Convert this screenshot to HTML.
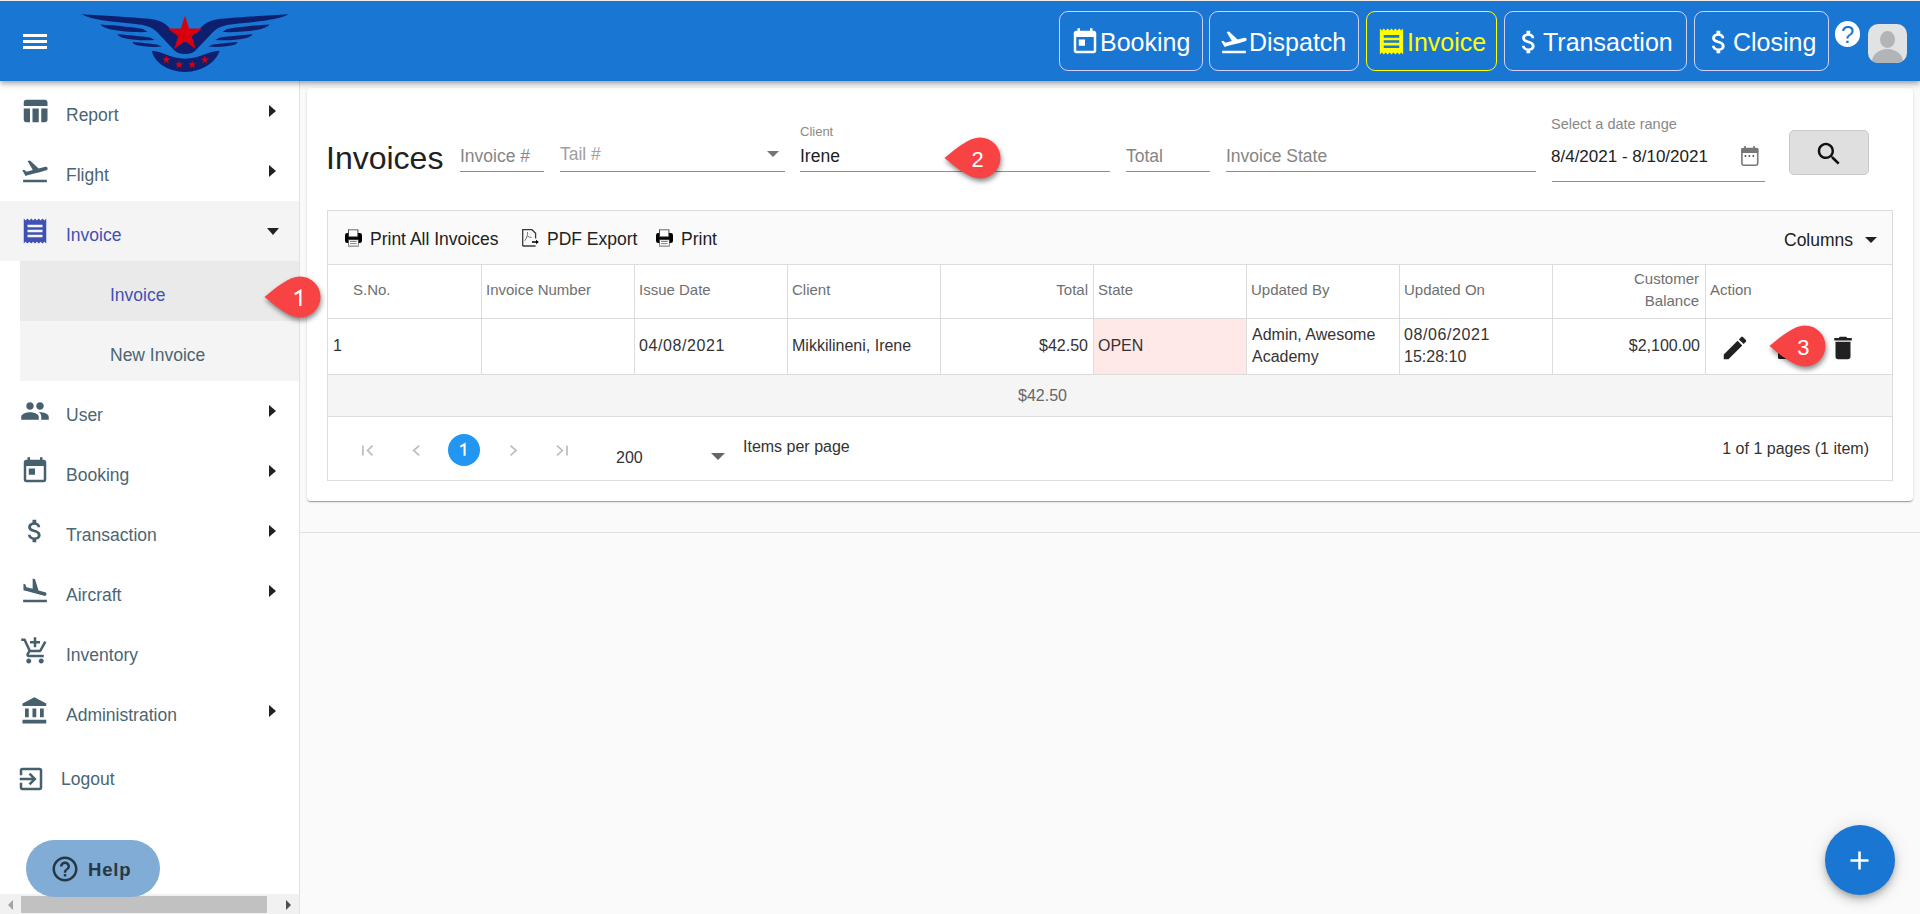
<!DOCTYPE html>
<html><head><meta charset="utf-8">
<style>
*{box-sizing:border-box;margin:0;padding:0}
html,body{width:1920px;height:914px;overflow:hidden;background:#fafafa;font-family:"Liberation Sans",sans-serif;position:relative}
.abs{position:absolute}
svg{position:absolute;overflow:visible;z-index:7}
.t{position:absolute;white-space:nowrap;line-height:1;z-index:7}
.hb{position:absolute;top:11px;height:60px;border:1px solid #d2d0ff;border-radius:9px;z-index:6}
.arr{position:absolute;left:269px;width:0;height:0;border-top:6px solid transparent;border-bottom:6px solid transparent;border-left:7px solid #212121;z-index:7}
.ul{position:absolute;height:1px;background:#8d8d8d;z-index:7}
.vl{position:absolute;width:1px;background:#dcdcdc;z-index:7}
.hl{position:absolute;height:1px;background:#dcdcdc;z-index:7}
.z{z-index:6}
</style></head>
<body>

<div class="abs" style="left:0;top:0;width:1920px;height:1px;background:#f3e9e3;z-index:6"></div>
<div class="abs" style="left:0;top:1px;width:1920px;height:80px;background:#1976d2;box-shadow:0 2px 4px -1px rgba(0,0,0,.2),0 4px 5px 0 rgba(0,0,0,.14),0 1px 10px 0 rgba(0,0,0,.12);z-index:5"></div>
<div class="abs z" style="left:23px;top:34px;width:24px;height:3px;background:#fff"></div>
<div class="abs z" style="left:23px;top:40px;width:24px;height:3px;background:#fff"></div>
<div class="abs z" style="left:23px;top:46px;width:24px;height:3px;background:#fff"></div>
<svg style="left:81px;top:13px" width="208" height="60" viewBox="0 0 208 60"><path fill="#0d1f6e" d="M0.5,1.2 C20,2.5 50,4 68,5.8 C77,6.8 82,9 87,13.5 L105,30 L105,41 C99,41 96,40 93,37 L76,19 C70,13 62,11.5 50,10.5 C30,8.5 10,6.5 0.5,1.2 Z"/><g transform="translate(208,0) scale(-1,1)"><path fill="#0d1f6e" d="M0.5,1.2 C20,2.5 50,4 68,5.8 C77,6.8 82,9 87,13.5 L105,30 L105,41 C99,41 96,40 93,37 L76,19 C70,13 62,11.5 50,10.5 C30,8.5 10,6.5 0.5,1.2 Z"/></g><path fill="#0d1f6e" d="M19.5,11.6 C35,12.6 52,14.2 62,16 L66.5,19 C55,19.5 40,18.5 30,16.5 C24,15.2 21,13.5 19.5,11.6 Z"/><g transform="translate(208,0) scale(-1,1)"><path fill="#0d1f6e" d="M19.5,11.6 C35,12.6 52,14.2 62,16 L66.5,19 C55,19.5 40,18.5 30,16.5 C24,15.2 21,13.5 19.5,11.6 Z"/></g><path fill="#0d1f6e" d="M36.3,21.2 C48,22 60,23.2 69,24.5 L73.8,27 C63,27.8 52,27 45,25.5 C40,24.4 37.5,23 36.3,21.2 Z"/><g transform="translate(208,0) scale(-1,1)"><path fill="#0d1f6e" d="M36.3,21.2 C48,22 60,23.2 69,24.5 L73.8,27 C63,27.8 52,27 45,25.5 C40,24.4 37.5,23 36.3,21.2 Z"/></g><path fill="#0d1f6e" d="M51.3,28.9 C60,29.5 70,30.6 76,31.5 L80.8,33.6 C72,34.2 64,33.8 58,32.6 C54,31.8 52,30.5 51.3,28.9 Z"/><g transform="translate(208,0) scale(-1,1)"><path fill="#0d1f6e" d="M51.3,28.9 C60,29.5 70,30.6 76,31.5 L80.8,33.6 C72,34.2 64,33.8 58,32.6 C54,31.8 52,30.5 51.3,28.9 Z"/></g><path fill="#0d1f6e" d="M71,37.8 C80,38 90,45.7 104,45.7 C118,45.7 128,38 138.5,37.8 C136,48 122,59 104,59 C86,59 72,48 71,37.8 Z"/><polygon fill="#d9000d" points="104.00,2.60 108.15,15.38 121.59,15.38 110.72,23.28 114.87,36.07 104.00,28.17 93.13,36.07 97.28,23.28 86.41,15.38 99.85,15.38"/><polygon fill="#d9000d" points="85.40,42.60 86.37,45.57 89.49,45.57 86.96,47.41 87.93,50.38 85.40,48.54 82.87,50.38 83.84,47.41 81.31,45.57 84.43,45.57"/><polygon fill="#d9000d" points="98.00,47.40 98.97,50.37 102.09,50.37 99.56,52.21 100.53,55.18 98.00,53.34 95.47,55.18 96.44,52.21 93.91,50.37 97.03,50.37"/><polygon fill="#d9000d" points="111.20,47.40 112.17,50.37 115.29,50.37 112.76,52.21 113.73,55.18 111.20,53.34 108.67,55.18 109.64,52.21 107.11,50.37 110.23,50.37"/><polygon fill="#d9000d" points="123.80,42.60 124.77,45.57 127.89,45.57 125.36,47.41 126.33,50.38 123.80,48.54 121.27,50.38 122.24,47.41 119.71,45.57 122.83,45.57"/></svg>
<div class="hb" style="left:1059px;width:144px"></div>
<div class="hb" style="left:1209px;width:150px"></div>
<div class="hb" style="left:1366px;width:131px;border-color:#ffff00"></div>
<div class="hb" style="left:1504px;width:183px"></div>
<div class="hb" style="left:1694px;width:135px"></div>
<svg style="left:1070px;top:27px;" width="30" height="30" viewBox="0 0 24 24"><path fill="#fff" d="M19 3h-1V1h-2v2H8V1H6v2H5c-1.11 0-1.99.9-1.99 2L3 19c0 1.1.89 2 2 2h14c1.1 0 2-.9 2-2V5c0-1.1-.9-2-2-2zm0 16H5V8h14v11zM7 10h5v5H7z"/></svg>
<div class="t" style="left:1100px;top:30px;font-size:25px;color:#fff;font-weight:400;">Booking</div>
<svg style="left:1219px;top:27px;" width="30" height="30" viewBox="0 0 24 24"><path fill="#fff" d="M2.5 19h19v2h-19zm19.57-9.36c-.21-.8-1.04-1.28-1.84-1.06L14.92 10l-6.9-6.43-1.93.51 4.14 7.17-4.97 1.33-1.97-1.54-1.45.39 1.82 3.16.77 1.33 1.6-.43 5.31-1.42 4.35-1.16L21 11.49c.81-.23 1.28-1.05 1.07-1.85z"/></svg>
<div class="t" style="left:1249px;top:30px;font-size:25px;color:#fff;font-weight:400;">Dispatch</div>
<svg style="left:1376px;top:26px;" width="31" height="31" viewBox="0 0 24 24"><path fill="#ffff00" d="M18 17H6v-2h12v2zm0-4H6v-2h12v2zm0-4H6V7h12v2zM3 22l1.5-1.5L6 22l1.5-1.5L9 22l1.5-1.5L12 22l1.5-1.5L15 22l1.5-1.5L18 22l1.5-1.5L21 22V2l-1.5 1.5L18 2l-1.5 1.5L15 2l-1.5 1.5L12 2l-1.5 1.5L9 2 7.5 3.5 6 2 4.5 3.5 3 2v20z"/></svg>
<div class="t" style="left:1407px;top:30px;font-size:25px;color:#ffff00;font-weight:400;">Invoice</div>
<svg style="left:1514px;top:27px;" width="30" height="30" viewBox="0 0 24 24"><path fill="#fff" d="M11.8 10.9c-2.27-.59-3-1.2-3-2.15 0-1.09 1.01-1.85 2.7-1.85 1.78 0 2.44.85 2.5 2.1h2.21c-.07-1.72-1.12-3.3-3.21-3.81V3h-3v2.16c-1.94.42-3.5 1.68-3.5 3.61 0 2.31 1.91 3.46 4.7 4.13 2.5.6 3 1.48 3 2.41 0 .69-.49 1.79-2.7 1.79-2.06 0-2.87-.92-2.98-2.1h-2.2c.12 2.19 1.76 3.42 3.68 3.83V21h3v-2.15c1.95-.37 3.5-1.5 3.5-3.55 0-2.84-2.43-3.81-4.7-4.4z"/></svg>
<div class="t" style="left:1543px;top:30px;font-size:25px;color:#fff;font-weight:400;">Transaction</div>
<svg style="left:1704px;top:27px;" width="30" height="30" viewBox="0 0 24 24"><path fill="#fff" d="M11.8 10.9c-2.27-.59-3-1.2-3-2.15 0-1.09 1.01-1.85 2.7-1.85 1.78 0 2.44.85 2.5 2.1h2.21c-.07-1.72-1.12-3.3-3.21-3.81V3h-3v2.16c-1.94.42-3.5 1.68-3.5 3.61 0 2.31 1.91 3.46 4.7 4.13 2.5.6 3 1.48 3 2.41 0 .69-.49 1.79-2.7 1.79-2.06 0-2.87-.92-2.98-2.1h-2.2c.12 2.19 1.76 3.42 3.68 3.83V21h3v-2.15c1.95-.37 3.5-1.5 3.5-3.55 0-2.84-2.43-3.81-4.7-4.4z"/></svg>
<div class="t" style="left:1733px;top:30px;font-size:25px;color:#fff;font-weight:400;">Closing</div>
<div class="abs" style="left:1834.7px;top:20.8px;width:25.8px;height:25.8px;border-radius:50%;background:#fff;z-index:7"></div><div class="t" style="left:1647.6px;width:400px;text-align:center;top:23px;font-size:24px;color:#1976d2;font-weight:400;z-index:8">?</div>
<div class="abs z" style="left:1868px;top:24px;width:39px;height:39px;border-radius:10px;background:#e1e2e3;overflow:hidden"><div class="abs" style="left:11.7px;top:7.3px;width:15.5px;height:16.8px;border-radius:50%;background:#b2b5b8"></div><div class="abs" style="left:4.2px;top:24.7px;width:31px;height:26px;border-radius:50% 50% 0 0;background:#b2b5b8"></div></div>
<div class="abs" style="left:0;top:81px;width:300px;height:833px;background:#fff;border-right:1px solid #e2e2e2;z-index:2"></div>
<div class="abs" style="left:0;top:201px;width:299px;height:60px;background:#f4f4f4;z-index:3"></div>
<div class="abs" style="left:20px;top:261px;width:279px;height:60px;background:#eaeaea;z-index:3"></div>
<div class="abs" style="left:20px;top:321px;width:279px;height:60px;background:#f4f4f4;z-index:3"></div>
<svg style="left:20px;top:96px;" width="30" height="30" viewBox="0 0 24 24"><path fill="#46606e" d="M10 10.02h5V21h-5zM17 21h3c1.1 0 2-.9 2-2v-9h-5v11zm3-18H5c-1.1 0-2 .9-2 2v3h19V5c0-1.1-.9-2-2-2zM3 19c0 1.1.9 2 2 2h3V10H3v9z"/></svg>
<div class="t" style="left:66px;top:107px;font-size:17.5px;color:#4b6572;font-weight:400;">Report</div>
<div class="arr" style="top:105px"></div>
<svg style="left:20px;top:156px;" width="30" height="30" viewBox="0 0 24 24"><path fill="#46606e" d="M2.5 19h19v2h-19zm19.57-9.36c-.21-.8-1.04-1.28-1.84-1.06L14.92 10l-6.9-6.43-1.93.51 4.14 7.17-4.97 1.33-1.97-1.54-1.45.39 1.82 3.16.77 1.33 1.6-.43 5.31-1.42 4.35-1.16L21 11.49c.81-.23 1.28-1.05 1.07-1.85z"/></svg>
<div class="t" style="left:66px;top:167px;font-size:17.5px;color:#4b6572;font-weight:400;">Flight</div>
<div class="arr" style="top:165px"></div>
<svg style="left:20px;top:216px;" width="30" height="30" viewBox="0 0 24 24"><path fill="#3f51b5" d="M18 17H6v-2h12v2zm0-4H6v-2h12v2zm0-4H6V7h12v2zM3 22l1.5-1.5L6 22l1.5-1.5L9 22l1.5-1.5L12 22l1.5-1.5L15 22l1.5-1.5L18 22l1.5-1.5L21 22V2l-1.5 1.5L18 2l-1.5 1.5L15 2l-1.5 1.5L12 2l-1.5 1.5L9 2 7.5 3.5 6 2 4.5 3.5 3 2v20z"/></svg>
<div class="t" style="left:66px;top:227px;font-size:17.5px;color:#3f51b5;font-weight:400;">Invoice</div>
<div class="abs" style="left:267px;top:228px;width:0;height:0;border-left:6px solid transparent;border-right:6px solid transparent;border-top:7px solid #212121;z-index:7"></div>
<div class="t" style="left:110px;top:287px;font-size:17.5px;color:#3f51b5;font-weight:400;">Invoice</div>
<div class="t" style="left:110px;top:347px;font-size:17.5px;color:#4b6572;font-weight:400;">New Invoice</div>
<svg style="left:20px;top:396px;" width="30" height="30" viewBox="0 0 24 24"><path fill="#46606e" d="M16 11c1.66 0 2.99-1.34 2.99-3S17.66 5 16 5c-1.66 0-3 1.34-3 3s1.34 3 3 3zm-8 0c1.66 0 2.99-1.34 2.99-3S9.66 5 8 5C6.34 5 5 6.34 5 8s1.34 3 3 3zm0 2c-2.33 0-7 1.17-7 3.5V19h14v-2.5c0-2.33-4.67-3.5-7-3.5zm8 0c-.29 0-.62.02-.97.05 1.16.84 1.97 1.97 1.97 3.45V19h6v-2.5c0-2.33-4.67-3.5-7-3.5z"/></svg>
<div class="t" style="left:66px;top:407px;font-size:17.5px;color:#4b6572;font-weight:400;">User</div>
<div class="arr" style="top:405px"></div>
<svg style="left:20px;top:456px;" width="30" height="30" viewBox="0 0 24 24"><path fill="#46606e" d="M19 3h-1V1h-2v2H8V1H6v2H5c-1.11 0-1.99.9-1.99 2L3 19c0 1.1.89 2 2 2h14c1.1 0 2-.9 2-2V5c0-1.1-.9-2-2-2zm0 16H5V8h14v11zM7 10h5v5H7z"/></svg>
<div class="t" style="left:66px;top:467px;font-size:17.5px;color:#4b6572;font-weight:400;">Booking</div>
<div class="arr" style="top:465px"></div>
<svg style="left:20px;top:516px;" width="30" height="30" viewBox="0 0 24 24"><path fill="#46606e" d="M11.8 10.9c-2.27-.59-3-1.2-3-2.15 0-1.09 1.01-1.85 2.7-1.85 1.78 0 2.44.85 2.5 2.1h2.21c-.07-1.72-1.12-3.3-3.21-3.81V3h-3v2.16c-1.94.42-3.5 1.68-3.5 3.61 0 2.31 1.91 3.46 4.7 4.13 2.5.6 3 1.48 3 2.41 0 .69-.49 1.79-2.7 1.79-2.06 0-2.87-.92-2.98-2.1h-2.2c.12 2.19 1.76 3.42 3.68 3.83V21h3v-2.15c1.95-.37 3.5-1.5 3.5-3.55 0-2.84-2.43-3.81-4.7-4.4z"/></svg>
<div class="t" style="left:66px;top:527px;font-size:17.5px;color:#4b6572;font-weight:400;">Transaction</div>
<div class="arr" style="top:525px"></div>
<svg style="left:20px;top:576px;" width="30" height="30" viewBox="0 0 24 24"><path fill="#46606e" d="M2.5 19h19v2h-19zm7.18-5.73l4.35 1.16 5.31 1.42c.8.21 1.62-.26 1.84-1.06.21-.8-.26-1.62-1.06-1.84l-5.31-1.42-2.76-9.02L10.12 2v8.28L5.15 8.95l-.93-2.32-1.45-.39v5.17l1.6.43 5.31 1.43z"/></svg>
<div class="t" style="left:66px;top:587px;font-size:17.5px;color:#4b6572;font-weight:400;">Aircraft</div>
<div class="arr" style="top:585px"></div>
<svg style="left:20px;top:636px;" width="30" height="30" viewBox="0 0 24 24"><path fill="#46606e" d="M11 9h2V6h3V4h-3V1h-2v3H8v2h3v3zm-4 9c-1.1 0-1.99.9-1.99 2S5.9 22 7 22s2-.9 2-2-.9-2-2-2zm10 0c-1.1 0-1.99.9-1.99 2s.89 2 1.99 2 2-.9 2-2-.9-2-2-2zm-9.83-3.25l.03-.12.9-1.63h7.45c.75 0 1.41-.41 1.75-1.03l3.86-7.01L19.42 4h-.01l-1.1 2-2.76 5H8.53l-.13-.27L6.16 6l-.95-2-.94-2H1v2h2l3.6 7.59-1.35 2.45c-.16.28-.25.61-.25.96 0 1.1.9 2 2 2h12v-2H7.42c-.13 0-.25-.11-.25-.25z"/></svg>
<div class="t" style="left:66px;top:647px;font-size:17.5px;color:#4b6572;font-weight:400;">Inventory</div>
<svg style="left:20px;top:696px;" width="30" height="30" viewBox="0 0 24 24"><path fill="#46606e" d="M4 10v7h3v-7H4zm6 0v7h3v-7h-3zM2 22h19v-3H2v3zm14-12v7h3v-7h-3zm-4.5-9L2 6v2h19V6l-9.5-5z"/></svg>
<div class="t" style="left:66px;top:707px;font-size:17.5px;color:#4b6572;font-weight:400;">Administration</div>
<div class="arr" style="top:705px"></div>
<svg style="left:16px;top:764px;" width="30" height="30" viewBox="0 0 24 24"><path fill="#46606e" d="M10.09 15.59L11.5 17l5-5-5-5-1.41 1.41L12.67 11H3v2h9.67l-2.58 2.59zM19 3H5c-1.11 0-2 .9-2 2v4h2V5h14v14H5v-4H3v4c0 1.1.89 2 2 2h14c1.1 0 2-.9 2-2V5c0-1.1-.9-2-2-2z"/></svg>
<div class="t" style="left:61px;top:771px;font-size:17.5px;color:#4b6572;font-weight:400;">Logout</div>
<div class="abs" style="left:26px;top:840px;width:134px;height:57px;border-radius:29px;background:#80acd5;z-index:10"></div>
<svg style="left:50px;top:853.5px;z-index:11" width="30" height="30" viewBox="0 0 24 24"><path fill="#263746" d="M11 18h2v-2h-2v2zm1-16C6.48 2 2 6.48 2 12s4.48 10 10 10 10-4.48 10-10S17.52 2 12 2zm0 18c-4.41 0-8-3.59-8-8s3.59-8 8-8 8 3.59 8 8-3.59 8-8 8zm0-14c-2.21 0-4 1.79-4 4h2c0-1.1.9-2 2-2s2 .9 2 2c0 2-3 1.75-3 5h2c0-2.25 3-2.5 3-5 0-2.21-1.79-4-4-4z"/></svg>
<div class="t" style="left:88px;top:861px;font-size:18.5px;color:#263746;font-weight:700;letter-spacing:.8px;z-index:11">Help</div>
<div class="abs" style="left:0;top:894px;width:299px;height:20px;background:#f1f1f1;z-index:8"></div>
<div class="abs" style="left:21px;top:896px;width:246px;height:17px;background:#c1c1c1;z-index:9"></div>
<div class="abs" style="left:8px;top:899.5px;width:0;height:0;border-top:5px solid transparent;border-bottom:5px solid transparent;border-right:5px solid #a3a3a3;z-index:9"></div>
<div class="abs" style="left:286px;top:899.5px;width:0;height:0;border-top:5px solid transparent;border-bottom:5px solid transparent;border-left:5px solid #505050;z-index:9"></div>
<div class="abs" style="left:300px;top:532px;width:1620px;height:1px;background:#e0e0e0"></div>
<div class="abs" style="left:307px;top:88px;width:1606px;height:413px;background:#fff;border-radius:4px;box-shadow:0 2px 1px -1px rgba(0,0,0,.2),0 1px 1px 0 rgba(0,0,0,.14),0 1px 3px 0 rgba(0,0,0,.12);z-index:1"></div>
<div class="t" style="left:326px;top:142px;font-size:32px;color:#212121;font-weight:400;">Invoices</div>
<div class="t" style="left:460px;top:148px;font-size:17.5px;color:#858585;font-weight:400;">Invoice #</div>
<div class="ul" style="left:460px;top:171px;width:84px"></div>
<div class="t" style="left:560px;top:146px;font-size:17.5px;color:#a0a0a0;font-weight:400;">Tail #</div>
<div class="abs" style="left:767px;top:151px;width:0;height:0;border-left:6px solid transparent;border-right:6px solid transparent;border-top:6px solid #757575;z-index:7"></div>
<div class="ul" style="left:560px;top:171px;width:225px"></div>
<div class="t" style="left:800px;top:125px;font-size:13px;color:#8a8a8a;font-weight:400;">Client</div>
<div class="t" style="left:800px;top:148px;font-size:17.5px;color:#212121;font-weight:400;">Irene</div>
<div class="ul" style="left:800px;top:171px;width:310px"></div>
<div class="t" style="left:1126px;top:148px;font-size:17.5px;color:#858585;font-weight:400;">Total</div>
<div class="ul" style="left:1126px;top:171px;width:84px"></div>
<div class="t" style="left:1226px;top:148px;font-size:17.5px;color:#858585;font-weight:400;">Invoice State</div>
<div class="ul" style="left:1226px;top:171px;width:310px"></div>
<div class="t" style="left:1551px;top:117px;font-size:14.5px;color:#888888;font-weight:400;">Select a date range</div>
<div class="t" style="left:1551px;top:148px;font-size:17px;color:#212121;font-weight:400;">8/4/2021 - 8/10/2021</div>
<svg style="left:1740px;top:145px" width="20" height="22" viewBox="0 0 20 22"><rect x="1.9" y="3.6" width="15.8" height="16.6" rx="1.6" fill="none" stroke="#777" stroke-width="1.6"/><rect x="1.2" y="3" width="17.2" height="5" rx="1" fill="#777"/><rect x="4.2" y="1" width="1.7" height="3" fill="#777"/><rect x="13.2" y="1" width="1.7" height="3" fill="#777"/><rect x="4.7" y="10.1" width="1.5" height="1.8" fill="#444"/><rect x="8.6" y="10.1" width="1.5" height="1.8" fill="#444"/><rect x="12.6" y="10.1" width="1.5" height="1.8" fill="#444"/></svg>
<div class="ul" style="left:1552px;top:181px;width:213px"></div>
<div class="abs" style="left:1789px;top:130px;width:80px;height:45px;background:#dfdfdf;border:1px solid #c9c9c9;border-radius:5px;z-index:6"></div>
<svg style="left:1814px;top:139px;" width="30" height="30" viewBox="0 0 24 24"><path fill="#111" d="M15.5 14h-.79l-.28-.27C15.41 12.59 16 11.11 16 9.5 16 5.91 13.09 3 9.5 3S3 5.91 3 9.5 5.91 16 9.5 16c1.61 0 3.09-.59 4.23-1.57l.27.28v.79l5 4.99L20.49 19l-4.99-5zm-6 0C7.01 14 5 11.99 5 9.5S7.01 5 9.5 5 14 7.01 14 9.5 11.99 14 9.5 14z"/></svg>
<div class="abs" style="left:327px;top:210px;width:1566px;height:271px;border:1px solid #dcdcdc;background:#fff;z-index:2"></div>
<div class="abs" style="left:328px;top:211px;width:1564px;height:53px;background:#fafafa;z-index:3"></div>
<div class="hl" style="left:327px;top:264px;width:1566px"></div>
<div class="hl" style="left:327px;top:318px;width:1566px"></div>
<div class="abs" style="left:328px;top:374px;width:1564px;height:43px;background:#f5f5f5;border-top:1px solid #dcdcdc;border-bottom:1px solid #dcdcdc;z-index:3"></div>
<div class="abs" style="left:1094px;top:319px;width:152px;height:55px;background:#ffe8e8;z-index:3"></div>
<div class="vl" style="left:481px;top:264px;height:110px"></div>
<div class="vl" style="left:634px;top:264px;height:110px"></div>
<div class="vl" style="left:787px;top:264px;height:110px"></div>
<div class="vl" style="left:940px;top:264px;height:110px"></div>
<div class="vl" style="left:1093px;top:264px;height:110px"></div>
<div class="vl" style="left:1246px;top:264px;height:110px"></div>
<div class="vl" style="left:1399px;top:264px;height:110px"></div>
<div class="vl" style="left:1552px;top:264px;height:110px"></div>
<div class="vl" style="left:1705px;top:264px;height:110px"></div>
<svg style="left:345px;top:229px" width="18" height="18" viewBox="0 0 18 18"><rect x="0" y="4.1" width="17" height="9.8" rx="2.2" fill="#000"/><rect x="3.5" y="0.7" width="9.4" height="7.2" fill="#fff" stroke="#333" stroke-width="0.9"/><rect x="3.5" y="0.3" width="9.4" height="1.0" fill="#aaa"/><rect x="3.5" y="10.8" width="9.8" height="6.5" fill="#fff" stroke="#444" stroke-width="0.7"/><rect x="5" y="12.1" width="6.6" height="0.9" fill="#777"/><rect x="5" y="14.2" width="6.6" height="0.9" fill="#777"/><rect x="3.3" y="16.2" width="10.2" height="1.4" fill="#b8b8b8"/></svg>
<div class="t" style="left:370px;top:231px;font-size:17.5px;color:#212121;font-weight:400;">Print All Invoices</div>
<svg style="left:522px;top:229px" width="18" height="18" viewBox="0 0 18 18"><path d="M0.7,17 V0.7 H10 L13.6,4.3 V9.5 M13.6,17 H0.7" fill="none" stroke="#3a3a3a" stroke-width="1.3"/><path d="M5.6,3 C5.8,6 4.5,9.5 2.6,11.8 M5.3,7.2 C6.8,8 8,8.4 9.6,8.4" fill="none" stroke="#6d7390" stroke-width="1"/><path d="M10,13 H15" stroke="#000" stroke-width="1.5"/><path d="M14,10.8 L16.8,13 L14,15.2 Z" fill="#000"/></svg>
<div class="t" style="left:547px;top:231px;font-size:17.5px;color:#212121;font-weight:400;">PDF Export</div>
<svg style="left:656px;top:229px" width="18" height="18" viewBox="0 0 18 18"><rect x="0" y="4.1" width="17" height="9.8" rx="2.2" fill="#000"/><rect x="3.5" y="0.7" width="9.4" height="7.2" fill="#fff" stroke="#333" stroke-width="0.9"/><rect x="3.5" y="0.3" width="9.4" height="1.0" fill="#aaa"/><rect x="3.5" y="10.8" width="9.8" height="6.5" fill="#fff" stroke="#444" stroke-width="0.7"/><rect x="5" y="12.1" width="6.6" height="0.9" fill="#777"/><rect x="5" y="14.2" width="6.6" height="0.9" fill="#777"/><rect x="3.3" y="16.2" width="10.2" height="1.4" fill="#b8b8b8"/></svg>
<div class="t" style="left:681px;top:231px;font-size:17.5px;color:#212121;font-weight:400;">Print</div>
<div class="t" style="left:1784px;top:232px;font-size:17.5px;color:#212121;font-weight:400;">Columns</div>
<div class="abs" style="left:1865px;top:237px;width:0;height:0;border-left:6px solid transparent;border-right:6px solid transparent;border-top:6px solid #212121;z-index:7"></div>
<div class="t" style="left:353px;top:282px;font-size:15px;color:#6f6f6f;font-weight:400;">S.No.</div>
<div class="t" style="left:486px;top:282px;font-size:15px;color:#6f6f6f;font-weight:400;">Invoice Number</div>
<div class="t" style="left:639px;top:282px;font-size:15px;color:#6f6f6f;font-weight:400;">Issue Date</div>
<div class="t" style="left:792px;top:282px;font-size:15px;color:#6f6f6f;font-weight:400;">Client</div>
<div class="t" style="right:832px;top:282px;font-size:15px;color:#6f6f6f;font-weight:400;">Total</div>
<div class="t" style="left:1098px;top:282px;font-size:15px;color:#6f6f6f;font-weight:400;">State</div>
<div class="t" style="left:1251px;top:282px;font-size:15px;color:#6f6f6f;font-weight:400;">Updated By</div>
<div class="t" style="left:1404px;top:282px;font-size:15px;color:#6f6f6f;font-weight:400;">Updated On</div>
<div class="t" style="right:221px;top:271px;font-size:15px;color:#6f6f6f;font-weight:400;">Customer</div>
<div class="t" style="right:221px;top:293px;font-size:15px;color:#6f6f6f;font-weight:400;">Balance</div>
<div class="t" style="left:1710px;top:282px;font-size:15px;color:#6f6f6f;font-weight:400;">Action</div>
<div class="t" style="left:333px;top:338px;font-size:16px;color:#333;font-weight:400;">1</div>
<div class="t" style="left:639px;top:338px;font-size:16px;color:#333;font-weight:400;letter-spacing:.6px">04/08/2021</div>
<div class="t" style="left:792px;top:338px;font-size:16px;color:#333;font-weight:400;">Mikkilineni, Irene</div>
<div class="t" style="right:832px;top:338px;font-size:16px;color:#333;font-weight:400;">$42.50</div>
<div class="t" style="left:1098px;top:338px;font-size:16px;color:#333;font-weight:400;">OPEN</div>
<div class="t" style="left:1252px;top:327px;font-size:16px;color:#333;font-weight:400;">Admin, Awesome</div>
<div class="t" style="left:1252px;top:349px;font-size:16px;color:#333;font-weight:400;">Academy</div>
<div class="t" style="left:1404px;top:327px;font-size:16px;color:#333;font-weight:400;letter-spacing:.6px">08/06/2021</div>
<div class="t" style="left:1404px;top:349px;font-size:16px;color:#333;font-weight:400;">15:28:10</div>
<div class="t" style="right:220px;top:338px;font-size:16px;color:#333;font-weight:400;">$2,100.00</div>
<svg style="left:1720px;top:333px;" width="30" height="30" viewBox="0 0 24 24"><path fill="#212121" d="M3 17.25V21h3.75L17.81 9.94l-3.75-3.75L3 17.25zM20.71 7.04c.39-.39.39-1.02 0-1.41l-2.34-2.34c-.39-.39-1.02-.39-1.41 0l-1.83 1.83 3.75 3.75 1.83-1.83z"/></svg>
<svg style="left:1828px;top:333px;" width="30" height="30" viewBox="0 0 24 24"><path fill="#212121" d="M6 19c0 1.1.9 2 2 2h8c1.1 0 2-.9 2-2V7H6v12zM19 4h-3.5l-1-1h-5l-1 1H5v2h14V4z"/></svg>
<div class="t" style="right:853px;top:388px;font-size:16px;color:#666;font-weight:400;">$42.50</div>
<svg style="left:355px;top:440px" width="220" height="22" viewBox="0 0 220 22"><path d="M7.9,5.6 V15.4 M17.5,5.6 L12.6,10.5 L17.5,15.4" fill="none" stroke="#bdbdbd" stroke-width="1.7"/><path d="M64.2,5.6 L58.6,10.5 L64.2,15.4" fill="none" stroke="#bdbdbd" stroke-width="1.7"/><path d="M155.5,5.6 L161.1,10.5 L155.5,15.4" fill="none" stroke="#bdbdbd" stroke-width="1.7"/><path d="M202,5.6 L207.3,10.5 L202,15.4 M212,5.6 V15.4" fill="none" stroke="#bdbdbd" stroke-width="1.7"/></svg>
<div class="abs" style="left:448px;top:434px;width:32px;height:32px;border-radius:50%;background:#2196f3;z-index:6"></div>
<svg style="left:455px;top:440px" width="16" height="20" viewBox="0 0 16 20"><path d="M5.3,6.6 L9.6,4.3 V15.8" fill="none" stroke="#fff" stroke-width="2.1"/></svg>
<div class="t" style="left:616px;top:450px;font-size:16px;color:#333;font-weight:400;">200</div>
<div class="abs" style="left:711px;top:453px;width:0;height:0;border-left:7px solid transparent;border-right:7px solid transparent;border-top:7px solid #666;z-index:7"></div>
<div class="t" style="left:743px;top:439px;font-size:16px;color:#333;font-weight:400;">Items per page</div>
<div class="t" style="right:51px;top:441px;font-size:16px;color:#333;font-weight:400;">1 of 1 pages (1 item)</div>
<div class="abs" style="left:1825px;top:825px;width:70px;height:70px;border-radius:50%;background:#1976d2;box-shadow:0 3px 5px -1px rgba(0,0,0,.2),0 6px 10px 0 rgba(0,0,0,.14),0 1px 18px 0 rgba(0,0,0,.12);z-index:6"></div>
<svg style="left:1844px;top:845px;" width="31" height="31" viewBox="0 0 24 24"><path fill="#fff" d="M19 13h-6v6h-2v-6H5v-2h6V5h2v6h6v2z"/></svg>
<svg style="left:1774px;top:335px" width="20" height="26" viewBox="0 0 20 26"><rect x="4" y="10" width="13" height="14" rx="1.5" fill="#212121"/></svg><svg style="left:260.4px;top:272.4px;z-index:20;filter:drop-shadow(1px 3px 2.5px rgba(0,0,0,.45))" width="70" height="52" viewBox="-40 -25 70 52"><path fill="#f74343" d="M-35.5,0 C-24,-9.5 -11,-20.5 0,-20.5 A20.5,20.5 0 0 1 0,20.5 C-11,20.5 -24,9.5 -35.5,0 Z"/></svg><div class="t" style="left:260.4px;width:76px;text-align:center;top:288.4px;font-size:22px;color:#fff;z-index:21"></div><svg style="left:290px;top:285px;z-index:22" width="20" height="25" viewBox="0 0 20 25"><path d="M4.6,9.2 L10.3,5.9 V21" fill="none" stroke="#fff" stroke-width="2.3" stroke-linejoin="miter"/></svg><svg style="left:939.5px;top:132.5px;z-index:20;filter:drop-shadow(1px 3px 2.5px rgba(0,0,0,.45))" width="70" height="52" viewBox="-40 -25 70 52"><path fill="#f74343" d="M-35.5,0 C-24,-9.5 -11,-20.5 0,-20.5 A20.5,20.5 0 0 1 0,20.5 C-11,20.5 -24,9.5 -35.5,0 Z"/></svg><div class="t" style="left:939.5px;width:76px;text-align:center;top:148.5px;font-size:22px;color:#fff;z-index:21">2</div><svg style="left:1765.4px;top:320.5px;z-index:20;filter:drop-shadow(1px 3px 2.5px rgba(0,0,0,.45))" width="70" height="52" viewBox="-40 -25 70 52"><path fill="#f74343" d="M-35.5,0 C-24,-9.5 -11,-20.5 0,-20.5 A20.5,20.5 0 0 1 0,20.5 C-11,20.5 -24,9.5 -35.5,0 Z"/></svg><div class="t" style="left:1765.4px;width:76px;text-align:center;top:336.5px;font-size:22px;color:#fff;z-index:21">3</div>
</body></html>
